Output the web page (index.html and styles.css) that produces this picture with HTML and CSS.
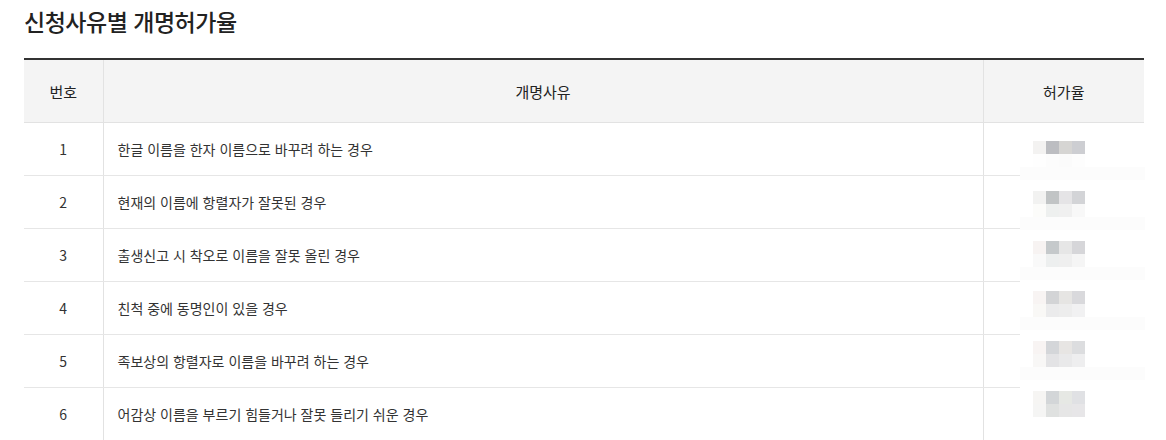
FILE: index.html
```html
<!DOCTYPE html>
<html lang="ko">
<head>
<meta charset="utf-8">
<title>신청사유별 개명허가율</title>
<link rel="stylesheet" href="styles.css">
</head>
<body>
<div class="page">
  <h2 class="title">신청사유별 개명허가율</h2>
  <div class="table-wrap">
    <table class="rate-table">
      <colgroup>
        <col class="c-no">
        <col class="c-reason">
        <col class="c-rate">
      </colgroup>
      <thead>
        <tr><th>번호</th><th>개명사유</th><th>허가율</th></tr>
      </thead>
      <tbody>
        <tr><td class="no">1</td><td class="reason">한글 이름을 한자 이름으로 바꾸려 하는 경우</td><td class="rate"></td></tr>
        <tr><td class="no">2</td><td class="reason">현재의 이름에 항렬자가 잘못된 경우</td><td class="rate"></td></tr>
        <tr><td class="no">3</td><td class="reason">출생신고 시 착오로 이름을 잘못 올린 경우</td><td class="rate"></td></tr>
        <tr><td class="no">4</td><td class="reason">친척 중에 동명인이 있을 경우</td><td class="rate"></td></tr>
        <tr><td class="no">5</td><td class="reason">족보상의 항렬자로 이름을 바꾸려 하는 경우</td><td class="rate"></td></tr>
        <tr><td class="no">6</td><td class="reason">어감상 이름을 부르기 힘들거나 잘못 들리기 쉬운 경우</td><td class="rate"></td></tr>
      </tbody>
    </table>
    <div class="mosaic" aria-hidden="true">
      <div class="m-group">
        <div class="m-row"><i style="background:#f3f2f1"></i><i style="background:#bcbdc1"></i><i style="background:#d6d5d3"></i><i style="background:#cdced2"></i></div>
        <div class="m-row"><i style="background:#fefefe"></i><i style="background:#fcfcfc"></i><i style="background:#fbfbfb"></i><i style="background:#fdfdfd"></i></div>
        <div class="m-strip"></div>
      </div>
      <div class="m-group">
        <div class="m-row"><i style="background:#f2f2f1"></i><i style="background:#c1c4c5"></i><i style="background:#e5e4e6"></i><i style="background:#d3d4d7"></i></div>
        <div class="m-row"><i style="background:#fcfcfa"></i><i style="background:#eef0ef"></i><i style="background:#f0f0f0"></i><i style="background:#f8f8f8"></i></div>
        <div class="m-strip"></div>
      </div>
      <div class="m-group">
        <div class="m-row"><i style="background:#f7f3f2"></i><i style="background:#c5c9cb"></i><i style="background:#e6e6e6"></i><i style="background:#d6d6d9"></i></div>
        <div class="m-row"><i style="background:#f9f9f9"></i><i style="background:#edefef"></i><i style="background:#efefef"></i><i style="background:#f5f5f5"></i></div>
        <div class="m-strip"></div>
      </div>
      <div class="m-group">
        <div class="m-row"><i style="background:#f8f4f3"></i><i style="background:#d3d4d6"></i><i style="background:#e6e5e3"></i><i style="background:#d9d9dc"></i></div>
        <div class="m-row"><i style="background:#f9f8f6"></i><i style="background:#ebebec"></i><i style="background:#ededed"></i><i style="background:#f1f1f2"></i></div>
        <div class="m-strip"></div>
      </div>
      <div class="m-group">
        <div class="m-row"><i style="background:#f8f4f3"></i><i style="background:#d4d6d9"></i><i style="background:#e7e5e3"></i><i style="background:#dcdddf"></i></div>
        <div class="m-row"><i style="background:#f8f7f6"></i><i style="background:#e3e3e5"></i><i style="background:#e9e9ea"></i><i style="background:#eeeeef"></i></div>
        <div class="m-strip"></div>
      </div>
      <div class="m-group">
        <div class="m-row"><i style="background:#f6f5f3"></i><i style="background:#d3d6d8"></i><i style="background:#e6e8e4"></i><i style="background:#e0e1e4"></i></div>
        <div class="m-row"><i style="background:#f5f5f4"></i><i style="background:#dfe1e0"></i><i style="background:#e6e6e6"></i><i style="background:#e7e6e8"></i></div>
      </div>
    </div>
  </div>
</div>
</body>
</html>
```

FILE: styles.css
```css
html, body {
  margin: 0;
  padding: 0;
  background: #fff;
}
body {
  font-family: "Noto Sans CJK KR", "Noto Sans", sans-serif;
  color: #333;
}
.page {
  padding: 0 22px 0 24px;
}
.title {
  margin: 0;
  padding-top: 6px;
  height: 58px;
  box-sizing: border-box;
  font-size: 23px;
  line-height: 30px;
  font-weight: 500;
  color: #222;
  letter-spacing: -0.5px;
}
.table-wrap {
  position: relative;
  width: 1120px;
}
.rate-table {
  width: 1120px;
  border-collapse: collapse;
  table-layout: fixed;
  border-top: 2px solid #333;
}
.c-no { width: 79px; }
.c-reason { width: 880px; }
.c-rate { width: 161px; }
.rate-table th {
  height: 62px;
  padding: 0;
  background: #f4f4f4;
  font-weight: 400;
  font-size: 15px;
  color: #222;
  border-bottom: 1px solid #e2e2e2;
  border-left: 1px solid #e2e2e2;
  text-align: center;
  vertical-align: middle;
}
.rate-table th:first-child { border-left: none; }
.rate-table td {
  height: 52px;
  padding: 0;
  font-size: 14px;
  color: #333;
  border-bottom: 1px solid #e6e6e6;
  border-left: 1px solid #e2e2e2;
  vertical-align: middle;
}
.rate-table td:first-child { border-left: none; }
.rate-table td.no {
  text-align: center;
  font-size: 14px;
}
.rate-table td.reason {
  padding-left: 14px;
}
.mosaic {
  position: absolute;
  left: 996px;
  top: 65px;
  width: 125px;
  bottom: 0;
  background: #fff;
  padding-top: 18px;
  box-sizing: border-box;
  display: flex;
  flex-direction: column;
}
.m-group {
  height: 52px;
  display: flex;
  flex-direction: column;
}
.m-row {
  display: flex;
  padding-left: 13px;
  height: 13px;
}
.m-row i {
  display: block;
  width: 13px;
  height: 13px;
}
.m-strip {
  height: 13px;
  background: #fcfcfc;
}
```
